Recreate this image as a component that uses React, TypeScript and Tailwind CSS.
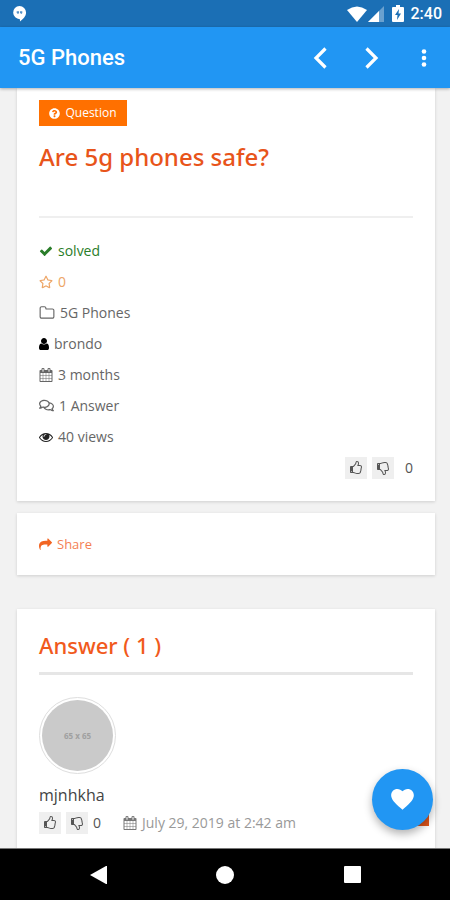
import type { ReactNode } from "react";
import { FaRegComments, FaRegStar, FaQuestionCircle } from "react-icons/fa";

const paths = {
  check:
    "M1671 566q0 40-28 68l-724 724-136 136q-28 28-68 28t-68-28l-136-136-362-362q-28-28-28-68t28-68l136-136q28-28 68-28t68 28l294 295 656-657q28-28 68-28t68 28l136 136q28 28 28 68z",
  folder:
    "M1600 1312v-704q0-40-28-68t-68-28h-704q-40 0-68-28t-28-68v-64q0-40-28-68t-68-28h-320q-40 0-68 28t-28 68v960q0 40 28 68t68 28h1216q40 0 68-28t28-68zm128-704v704q0 92-66 158t-158 66h-1216q-92 0-158-66t-66-158v-960q0-92 66-158t158-66h320q92 0 158 66t66 158v32h672q92 0 158 66t66 158z",
  user: "M1536 1399q0 109-62.5 187t-150.5 78h-854q-88 0-150.5-78t-62.5-187q0-85 8.5-160.5t31.5-152 58.5-131 94-89 134.5-34.5q131 128 313 128t313-128q76 0 134.5 34.5t94 89 58.5 131 31.5 152 8.5 160.5zm-256-887q0 159-112.5 271.5t-271.5 112.5-271.5-112.5-112.5-271.5 112.5-271.5 271.5-112.5 271.5 112.5 112.5 271.5z",
  calendar:
    "M192 1664h288v-288h-288v288zm352 0h320v-288h-320v288zm-352-352h288v-320h-288v320zm352 0h320v-320h-320v320zm-352-384h288v-288h-288v288zm736 736h320v-288h-320v288zm-384-736h320v-288h-320v288zm768 736h288v-288h-288v288zm-384-352h320v-320h-320v320zm-352-864v-288q0-13-9.5-22.5t-22.5-9.5h-64q-13 0-22.5 9.5t-9.5 22.5v288q0 13 9.5 22.5t22.5 9.5h64q13 0 22.5-9.5t9.5-22.5zm736 864h288v-320h-288v320zm-384-384h320v-288h-320v288zm384 0h288v-288h-288v288zm32-480v-288q0-13-9.5-22.5t-22.5-9.5h-64q-13 0-22.5 9.5t-9.5 22.5v288q0 13 9.5 22.5t22.5 9.5h64q13 0 22.5-9.5t9.5-22.5zm384-64v1280q0 52-38 90t-90 38h-1408q-52 0-90-38t-38-90v-1280q0-52 38-90t90-38h128v-96q0-66 47-113t113-47h64q66 0 113 47t47 113v96h384v-96q0-66 47-113t113-47h64q66 0 113 47t47 113v96h128q52 0 90 38t38 90z",
  eye: "M1664 960q-152-236-381-353 61 104 61 225 0 185-131.5 316.5t-316.5 131.5-316.5-131.5-131.5-316.5q0-121 61-225-229 117-381 353 133 205 333.5 326.5t434.5 121.5 434.5-121.5 333.5-326.5zm-720-384q0-20-14-34t-34-14q-125 0-214.5 89.5t-89.5 214.5q0 20 14 34t34 14 34-14 14-34q0-86 61-147t147-61q20 0 34-14t14-34zm848 384q0 34-20 69-140 230-376.5 368.5t-499.5 138.5-499.5-139-376.5-368q-20-35-20-69t20-69q140-229 376.5-368t499.5-139 499.5 139 376.5 368q20 35 20 69z",
  share:
    "M1792 640q0 26-19 45l-512 512q-19 19-45 19t-45-19-19-45v-256h-224q-98 0-175.5 6t-154 21.5-133 42.5-105.5 69.5-80 101-48.5 138.5-17.5 181q0 55 5 123 0 6 2.5 23.5t2.5 26.5q0 15-8.5 25t-23.5 10q-16 0-28-17-7-9-13-22t-13.5-30-10.5-24q-127-285-127-451 0-199 53-333 162-403 875-403h224v-256q0-26 19-45t45-19 45 19l512 512q19 19 19 45z",
  thumb:
    "M384 1344q0-26-19-45t-45-19-45 19-19 45 19 45 45 19 45-19 19-45zm1152-576q0-51-39-89.5t-89-38.5h-352q0-58 48-159.5t48-160.5q0-98-32-145t-128-47q-26 26-38 85t-30.5 125.5-59.5 109.5q-22 23-77 91-4 5-23 30t-31.5 41-34.5 42.5-40 44-38.5 35.5-40 27-35.5 9h-32v640h32q13 0 31.5 3t33 6.5 38 11 35 11.5 35.5 12.5 29 10.5q211 73 342 73h121q192 0 192-167 0-26-5-56 30-16 47.5-52.5t17.5-73.5-18-69q53-50 53-119 0-25-10-55.5t-25-47.5q32-1 53.5-47t21.5-81zm128-1q0 89-49 163 9 33 9 69 0 77-38 144 3 21 3 43 0 101-60 178 1 139-85 219.5t-227 80.5h-129q-96 0-189.5-22.5t-216.5-65.5q-116-40-138-40h-288q-53 0-90.5-37.5t-37.5-90.5v-640q0-53 37.5-90.5t90.5-37.5h274q36-24 137-155 58-75 107-128 24-25 35.5-85.5t30.5-126.5 62-108q39-37 90-37 84 0 151 32.5t102 101.5 35 186q0 93-48 192h176q104 0 180 76t76 179z",
};

function Icon({
  name,
  className = "size-[14px]",
  viewBox = "0 0 1792 1792",
}: {
  name: keyof typeof paths;
  className?: string;
  viewBox?: string;
}) {
  return (
    <svg viewBox={viewBox} fill="currentColor" aria-hidden="true" className={className}>
      <path d={paths[name]} />
    </svg>
  );
}

function StatusBar() {
  return (
    <div className="flex h-[27px] shrink-0 items-center justify-between bg-[#1b6fb5] pr-2 pl-3 text-white">
      <svg viewBox="0 0 16 18" className="h-[17px] w-[15px]" aria-hidden="true">
        <path d="M8 1a7 7 0 0 1 7 7c0 4-3 7-6.500 9.500V15A7 7 0 1 1 8 1z" fill="#fff" />
        <path d="M5 6.500h2.500v2L6.500 9.500H5.500l.5-1H5zM8.500 6.500H11v2L10 9.500H9l.5-1h-1z" fill="#5592c8" />
      </svg>
      <div className="flex items-center">
        <svg viewBox="0 0 20 16" className="h-4 w-5" fill="#fff" aria-hidden="true">
          <path d="M0 4Q10-3 20 4L10 16z" />
        </svg>
        <svg viewBox="0 0 16 16" className="ml-px size-4" fill="#fff" aria-hidden="true">
          <path d="M16 0v16H0z" opacity=".35" />
          <path d="M11 5v11H0z" />
        </svg>
        <svg viewBox="0 0 12 17" className="ml-2 h-[17px] w-3" aria-hidden="true">
          <path d="M4 0h4v2h3q1 0 1 1v13q0 1-1 1H1q-1 0-1-1V3q0-1 1-1h3z" fill="#fff" />
          <path d="M7 4 3 10h2.500L5 15l4-6.500H6.500z" fill="#1b6fb5" />
        </svg>
        <span className="ml-[7px] text-[16px] leading-5 font-medium">2:40</span>
      </div>
    </div>
  );
}

function AppBar() {
  return (
    <header className="relative z-10 flex h-[61px] shrink-0 items-center bg-[#2196f3] pl-[18px] text-white shadow-[0_1px_3px_rgba(0,0,0,0.3)]">
      <h1 className="flex-1 text-[22px] leading-7 font-medium">5G Phones</h1>
      <button type="button" aria-label="Previous" className="flex size-[52px] items-center justify-center">
        <svg viewBox="0 0 14 22" className="h-[22px] w-[14px]" fill="none" stroke="#fff" strokeWidth="3.200">
          <path d="M12.500 1.500 3 11l9.500 9.500" />
        </svg>
      </button>
      <button type="button" aria-label="Next" className="flex size-[52px] items-center justify-center">
        <svg viewBox="0 0 14 22" className="h-[22px] w-[14px]" fill="none" stroke="#fff" strokeWidth="3.200">
          <path d="M1.500 1.500 11 11l-9.500 9.500" />
        </svg>
      </button>
      <button type="button" aria-label="More options" className="flex size-[52px] items-center justify-center">
        <svg viewBox="0 0 6 20" className="h-5 w-[6px]" fill="#fff">
          <circle cx="3" cy="3.500" r="2.300" />
          <circle cx="3" cy="10" r="2.300" />
          <circle cx="3" cy="16.500" r="2.300" />
        </svg>
      </button>
    </header>
  );
}

function Votes() {
  return (
    <div className="flex items-center gap-[5px] text-[#555]">
      <button type="button" aria-label="Vote up" className="flex size-[22px] items-center justify-center bg-[#efefef]">
        <Icon name="thumb" />
      </button>
      <button type="button" aria-label="Vote down" className="flex size-[22px] items-center justify-center bg-[#efefef]">
        <Icon name="thumb" className="size-[14px] -scale-y-100" />
      </button>
    </div>
  );
}

function Meta({ icon, children, className = "text-[#666]" }: { icon: ReactNode; children: ReactNode; className?: string }) {
  return (
    <li className={`flex h-[31px] items-center gap-[5px] ${className}`}>
      {icon}
      <span>{children}</span>
    </li>
  );
}

const card = "bg-white px-[22px] shadow-[0_1px_3px_rgba(0,0,0,0.15)]";

export default function App() {
  return (
    <div className="flex h-screen flex-col overflow-hidden bg-[#f2f2f2] font-[Roboto,sans-serif]">
      <StatusBar />
      <AppBar />
      <div className="relative min-h-0 flex-1">
        <main className="h-full overflow-hidden pr-[15px] pl-[17px] font-['Open_Sans',sans-serif] text-[14px] leading-5">
          <article className={`${card} pt-3 pb-[22px]`}>
            <div className="flex h-[26px] w-[88px] items-center justify-center gap-[5px] bg-[#ff7000] text-[12px] text-white">
              <FaQuestionCircle className="size-[11px]" />
              Question
            </div>
            <h2 className="mt-[15px] font-['Noto_Sans',sans-serif] text-[24px] leading-8 font-medium text-[#e8541a]">Are 5g phones safe?</h2>
            <hr className="mt-[43px] border-t-2 border-[#efefef]" />
            <ul className="mt-[17px]">
              <Meta className="text-[#2a7d2a]" icon={<Icon name="check" />}>solved</Meta>
              <Meta className="text-[#eda566]" icon={<FaRegStar className="size-[14px]" />}>0</Meta>
              <Meta icon={<Icon name="folder" className="size-4" />}>5G Phones</Meta>
              <Meta icon={<Icon name="user" viewBox="256 128 1280 1536" className="h-3 w-[10px] text-black" />}>brondo</Meta>
              <Meta icon={<Icon name="calendar" />}>3 months</Meta>
              <Meta icon={<FaRegComments className="size-[15px]" />}>1 Answer</Meta>
              <Meta icon={<Icon name="eye" className="size-[14px] text-[#222]" />}>40 views</Meta>
            </ul>
            <div className="mt-[5px] flex items-center justify-end text-[#555]">
              <Votes />
              <span className="ml-[11px]">0</span>
            </div>
          </article>

          <section className={`${card} mt-3 flex h-[62px] items-center`}>
            <a href="#share" className="flex items-center gap-[5px] text-[13px] text-[#f47f54]">
              <Icon name="share" className="size-[13px] text-[#f26522]" />
              Share
            </a>
          </section>

          <section className={`${card} mt-[34px] pt-5 pb-10`}>
            <h2 className="font-['Noto_Sans',sans-serif] text-[22px] leading-8 font-medium text-[#f15a1c]">Answer ( 1 )</h2>
            <hr className="mt-[11px] border-t-[3px] border-[#e6e6e6]" />
            <div className="mt-[22px] size-[77px] rounded-full border border-[#dedede] p-[2px]">
              <div className="flex size-full items-center justify-center rounded-full bg-[#cacaca] text-[8px] font-bold text-[#a0a0a0]">
                65 x 65
              </div>
            </div>
            <div className="mt-[11px] text-[16px] text-[#444]">mjnhkha</div>
            <div className="mt-[7px] flex items-center text-[#555]">
              <Votes />
              <span className="ml-[5px]">0</span>
              <div className="ml-[22px] flex items-center gap-[5px] text-[#999]">
                <Icon name="calendar" className="size-[14px] text-[#777]" />
                <time dateTime="2019-07-29T02:42">July 29, 2019 at 2:42 am</time>
              </div>
            </div>
          </section>
        </main>
        <div className="absolute right-[21px] bottom-[22px] size-[30px] bg-[#e0561c]" />
        <button
          type="button"
          aria-label="Add to favourites"
          className="absolute right-[17px] bottom-[18px] flex size-[61px] items-center justify-center rounded-full bg-[#2196f3] shadow-[0_4px_8px_rgba(0,0,0,0.3)]"
        >
          <svg viewBox="2 3 20 18.500" className="h-[21px] w-[23px]" fill="#fff">
            <path d="M12 21.350 10.550 20.030C5.400 15.360 2 12.280 2 8.500 2 5.420 4.420 3 7.500 3c1.740 0 3.410.81 4.500 2.090C13.090 3.810 14.760 3 16.500 3 19.580 3 22 5.420 22 8.500c0 3.780-3.400 6.860-8.550 11.540z" />
          </svg>
        </button>
      </div>
      <nav className="relative z-10 flex h-[52px] shrink-0 justify-center border-t border-[#777] bg-black">
        <button type="button" aria-label="Back" className="flex w-[127px] items-center justify-center">
          <svg viewBox="0 0 17 18" className="h-[18px] w-[17px]" fill="#fff">
            <path d="M0 9 16 0h1v18h-1z" />
          </svg>
        </button>
        <button type="button" aria-label="Home" className="flex w-[127px] items-center justify-center">
          <span className="size-[18px] rounded-full bg-white" />
        </button>
        <button type="button" aria-label="Recent apps" className="flex w-[127px] items-center justify-center">
          <span className="size-[17px] rounded-[1px] bg-white" />
        </button>
      </nav>
    </div>
  );
}
